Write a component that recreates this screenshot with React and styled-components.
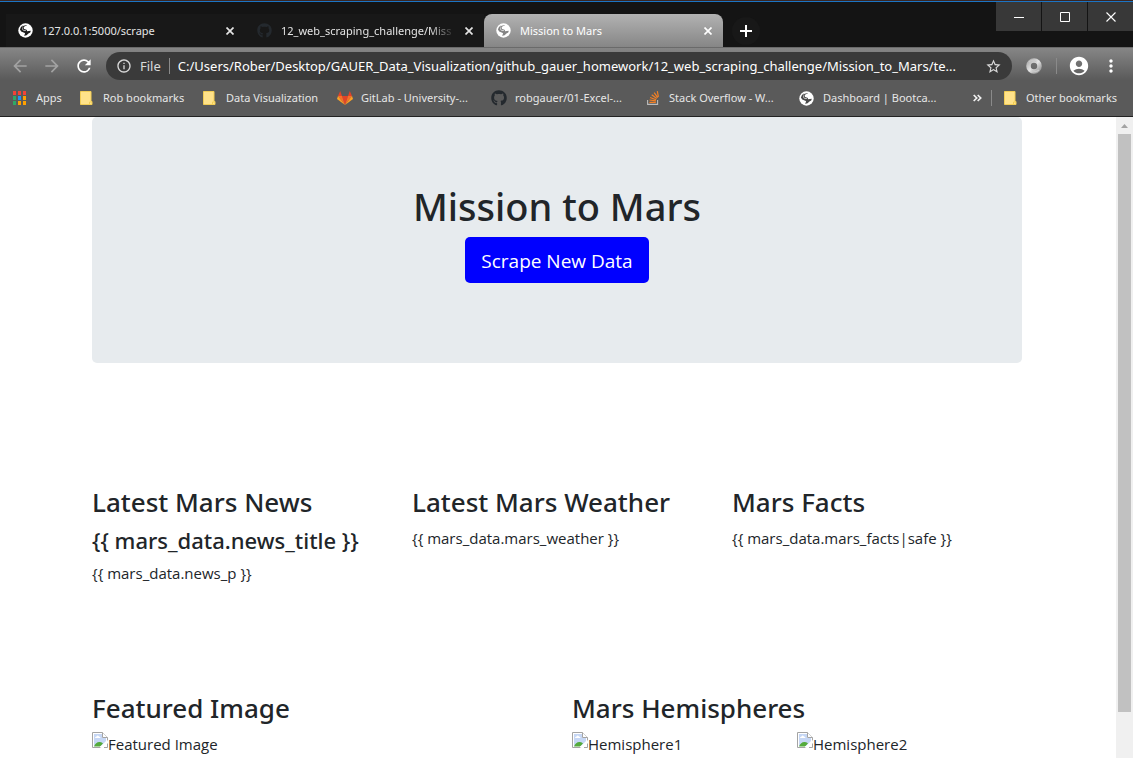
import React from 'react';
import styled, { createGlobalStyle, css } from 'styled-components';
import {
  MdArrowBack,
  MdArrowForward,
  MdRefresh,
  MdInfoOutline,
  MdStarBorder,
  MdAccountCircle,
  MdMoreVert,
} from 'react-icons/md';
import { FaGithub } from 'react-icons/fa';

const GlobalStyle = createGlobalStyle`
  * { box-sizing: border-box; }
  body {
    margin: 0;
    background: #fff;
    color: #212529;
    font-family: "Open Sans", "Noto Sans", sans-serif;
    font-size: 15px;
    line-height: 24px;
  }
  button { font-family: inherit; border: 0; padding: 0; background: none; }
  h1, h2, h3, p { margin: 0; }
  h1, h2, h3 { font-family: "Noto Sans", sans-serif; font-weight: 500; }
  a { color: inherit; text-decoration: none; }
  svg { display: block; flex: none; }
`;

const Window = styled.div`
  display: flex;
  flex-direction: column;
  height: 100vh;
  overflow: hidden;
`;

/* ---------- Title bar and tabs ---------- */

const TitleBar = styled.header`
  display: flex;
  flex: none;
  justify-content: space-between;
  height: 47px;
  background: #141414;
  border-top: 1px solid #3a2622;
  box-shadow: inset 0 1px 0 #1b74c4;
  font-family: "Noto Sans", sans-serif;
`;

const TabStrip = styled.div`
  display: flex;
  align-items: flex-end;
  min-width: 0;
  padding-left: 6px;
`;

const Tab = styled.div`
  position: relative;
  display: flex;
  align-items: center;
  width: 239px;
  height: 33px;
  padding: 0 9px 0 12px;
  color: #e4e4e4;
  background: #181818;
  ${(p) => p.$divider && css`
    &::after {
      content: "";
      position: absolute;
      right: -1px;
      top: 7px;
      width: 1px;
      height: 20px;
      background: #5c5c5c;
    }
  `}
  ${(p) => p.$active && css`
    color: #fff;
    background: linear-gradient(#b2b2b2, #868686);
    border-radius: 8px 8px 0 0;
  `}
`;

const TabTitle = styled.a`
  flex: 1;
  min-width: 0;
  margin: 0 8px 0 9px;
  overflow: hidden;
  white-space: nowrap;
  font-size: 11px;
  line-height: 18px;
  ${(p) => p.$fade && css`
    mask-image: linear-gradient(to right, #000 85%, transparent);
  `}
`;

const CloseTab = styled.button`
  display: flex;
  justify-content: center;
  width: 12px;
  color: inherit;
`;

const NewTab = styled.button`
  display: grid;
  place-items: center;
  width: 28px;
  height: 28px;
  margin: 0 0 2px 9px;
  border-radius: 14px;
  color: #fff;
  background: #181818;
`;

const WindowControls = styled.div`
  display: flex;
  flex: none;
  gap: 1px;
  padding-top: 1px;
`;

const WindowButton = styled.button`
  display: grid;
  place-items: center;
  width: 45px;
  height: 29px;
  color: #fff;
  background: #383838;
`;

/* ---------- Toolbar and bookmarks ---------- */

const Chrome = styled.div`
  flex: none;
  background: linear-gradient(#868686, #5a5a5a 32px);
  border-top: 1px solid #6a6a6a;
  border-bottom: 1px solid #222;
  font-family: "Noto Sans", sans-serif;
`;

const Toolbar = styled.nav`
  display: flex;
  align-items: center;
  height: 36px;
  padding: 0 12px 0 10px;
`;

const ToolButton = styled.button`
  display: grid;
  place-items: center;
  width: 20px;
  height: 28px;
  margin-right: 12px;
  color: ${(p) => (p.$muted ? '#a2a2a2' : '#fff')};
`;

const AddressBar = styled.div`
  display: flex;
  flex: 1;
  align-items: center;
  min-width: 0;
  height: 28px;
  padding: 0 10px;
  border-radius: 14px;
  background: #3a3a3a;
  color: #dadada;
  font-size: 13px;
  line-height: 20px;
`;

const Scheme = styled.span`
  margin-left: 8px;
`;

const Divider = styled.span`
  flex: none;
  width: 1px;
  height: 16px;
  margin: ${(p) => p.$margin};
  background: #8a8a8a;
`;

const Address = styled.input`
  flex: 1;
  min-width: 0;
  padding: 0;
  border: 0;
  outline: 0;
  background: none;
  color: #fff;
  font: inherit;
`;

const ToolbarEnd = styled.div`
  display: flex;
  flex: none;
  align-items: center;
  padding-left: 14px;
`;

const EndButton = styled.button`
  display: grid;
  place-items: center;
  width: ${(p) => p.$width};
  color: #fff;
`;

const MenuButton = styled(EndButton)`
  margin-left: 11px;
`;

const Bookmarks = styled.nav`
  display: flex;
  align-items: center;
  height: 32px;
  padding: 0 14px 4px 12px;
  color: #e6e6e6;
  font-size: 11px;
  line-height: 18px;
`;

const Bookmark = styled.a`
  display: flex;
  flex: none;
  align-items: center;
  width: ${(p) => p.$width};
  white-space: nowrap;
`;

const BookmarkIcon = styled.span`
  display: flex;
  flex: none;
  width: ${(p) => p.$width || '24px'};
`;

const BookmarksEnd = styled.div`
  display: flex;
  align-items: center;
  margin-left: auto;
`;

/* ---------- Page ---------- */

const Viewport = styled.div`
  display: flex;
  flex: 1;
  min-height: 0;
`;

const Page = styled.main`
  flex: 1;
  min-width: 0;
  padding-right: 2px;
  overflow: hidden;
`;

const Container = styled.div`
  max-width: 960px;
  margin: 0 auto;
  padding: 0 15px;
`;

const Jumbotron = styled.section`
  display: flex;
  flex-direction: column;
  align-items: center;
  padding: 65px 32px 80px;
  border-radius: 5px;
  background: #e7ebee;
`;

const PageTitle = styled.h1`
  margin-bottom: 7px;
  font-size: 38px;
  line-height: 48px;
`;

const ScrapeButton = styled.button`
  padding: 9px 16px 7px;
  border-radius: 5px;
  background: #00f;
  color: #fff;
  font-size: 19px;
  line-height: 30px;
`;

const Row = styled.div`
  display: grid;
  grid-template-columns: repeat(${(p) => p.$columns}, 1fr);
  column-gap: 30px;
  margin-top: ${(p) => p.$top};
`;

const Heading = styled.h2`
  margin-bottom: 7px;
  font-size: 26px;
  line-height: 34px;
  white-space: nowrap;
`;

const NewsTitle = styled.h3`
  margin-bottom: 6px;
  font-size: 22px;
  line-height: 29px;
  white-space: nowrap;
`;

const Gallery = styled.div`
  display: grid;
  grid-template-columns: 1fr 1fr;
`;

const Missing = styled.div`
  display: flex;
  white-space: nowrap;
`;

const ScrollTrack = styled.div`
  display: flex;
  flex: none;
  flex-direction: column;
  width: 17px;
  background: #f0f0f0;
`;

const ScrollArrow = styled.button`
  display: grid;
  place-items: center;
  height: 17px;
`;

const ScrollThumb = styled.div`
  height: 93%;
  max-height: calc(100% - 63px);
  margin: 0 2px;
  background: #c1c1c1;
`;

/* ---------- Drawings ---------- */

const GlobeIcon = ({ land = '#1c1c1c' }) => (
  <svg width="15" height="15" viewBox="0 0 15 15" aria-hidden="true">
    <circle cx="7.5" cy="7.5" r="7.2" fill="#fff" />
    <path
      d="M9.2 2.4Q6 2.6 5.6 4.6Q5.4 6.400 7.800 6.600Q9.400 6.900 9 8.300L12.800 7.700Q12.900 9.900 10.400 10.400Q8.600 12.900 6.200 12.700Q6.200 11.900 7.100 11.100Q7.300 9.600 5.600 9.400L3.200 8.600 1.900 6.500Q2.400 3.400 5.200 2.200Q3.900 4.200 4.100 5.700Q4.400 7.500 6.800 8Q8.700 8.300 7.900 7.500Q4.400 7.500 4.500 4.600Q5 2 9.200 2.400Z"
      fill={land}
    />
  </svg>
);

const CrossIcon = ({ size = 8, weight = 1.7 }) => (
  <svg width={size} height={size} viewBox={`0 0 ${size} ${size}`} aria-hidden="true">
    <path d={`M.5.5 ${size - 0.5} ${size - 0.5}M${size - 0.5} .5.5 ${size - 0.5}`} stroke="currentColor" strokeWidth={weight} />
  </svg>
);

const PlusIcon = () => (
  <svg width="12" height="12" viewBox="0 0 12 12" aria-hidden="true">
    <path d="M6 0v12M0 6h12" stroke="currentColor" strokeWidth="2" />
  </svg>
);

const MinimizeIcon = () => (
  <svg width="10" height="10" viewBox="0 0 10 10" aria-hidden="true">
    <path d="M0 5.5h10" stroke="currentColor" />
  </svg>
);

const MaximizeIcon = () => (
  <svg width="10" height="10" viewBox="0 0 10 10" aria-hidden="true">
    <path d="M.5.5h9v9h-9z" fill="none" stroke="currentColor" />
  </svg>
);

const appColors = ['#f44336', '#f44336', '#f44336', '#2fa866', '#2196f3', '#ffa000', '#2fa866', '#ffa000', '#ffa000'];

const AppsIcon = () => (
  <svg width="14" height="14" viewBox="0 0 14 14" aria-hidden="true">
    {appColors.map((fill, i) => (
      <rect key={i} x={1 + (i % 3) * 5} y={Math.floor(i / 3) * 5} width="3" height="4" fill={fill} />
    ))}
  </svg>
);

const FolderIcon = () => (
  <svg width="14" height="14" viewBox="0 0 14 14" aria-hidden="true">
    <path d="M1.5.5H12v10h1v3H1.5z" fill="#ffe28a" stroke="#f2cd55" />
    <path d="M10.5 13.5v-2.5h2.5" fill="none" stroke="#f2cd55" />
  </svg>
);

const GitLabIcon = () => (
  <svg width="16" height="14" viewBox="0 0 16 14" aria-hidden="true">
    <path d="M8 14 5 5h6z" fill="#e24329" />
    <path d="M8 14 5 5H1zM8 14l3-9h4z" fill="#fc6d26" />
    <path d="M1 5 0 8l8 6zM15 5l1 3-8 6z" fill="#fca326" />
    <path d="M1 5h4L3.2 0zM15 5h-4l1.8-5z" fill="#e24329" />
  </svg>
);

const StackOverflowIcon = () => (
  <svg width="15" height="14" viewBox="-2 0 15 14" aria-hidden="true">
    <path d="M.6 9v4.4h10V9" fill="none" stroke="#bcbbbb" strokeWidth="1.1" />
    <path d="M2.4 11.4h6.4M2.5 9 8.9 9.9M3.1 6.5l6 2.3M4.7 3.8 9.7 7.6M7.2 1.6l3.5 5M10.3.2l1.1 5.6" stroke="#f48024" strokeWidth="1.2" />
  </svg>
);

const ExtensionIcon = () => (
  <svg width="16" height="16" viewBox="0 0 16 16" aria-hidden="true">
    <defs>
      <linearGradient id="ring" x1="0" y1="0" x2="1" y2="1">
        <stop offset="0" stopColor="#b0b0b0" />
        <stop offset=".5" stopColor="#e4e4e4" />
        <stop offset="1" stopColor="#999" />
      </linearGradient>
    </defs>
    <ellipse cx="8" cy="8" rx="5.5" ry="5.5" fill="none" stroke="url(#ring)" strokeWidth="4.6" />
    <path d="M3 4Q7 .8 10.5 4.3M13 12Q9 15.2 5.5 11.7" fill="none" stroke="#c9c9c9" strokeWidth="1.2" />
  </svg>
);

const ChevronsIcon = () => (
  <svg width="9" height="8" viewBox="0 0 9 8" aria-hidden="true">
    <path d="m.7 1 3 3-3 3m4-6 3 3-3 3" fill="none" stroke="#f1f1f1" strokeWidth="1.7" />
  </svg>
);

const BrokenImageIcon = () => (
  <svg width="16" height="16" viewBox="0 0 16 16" aria-hidden="true">
    <path d="M.5.5h10l5 5v10H.5z" fill="#fff" stroke="#a4a4a4" />
    <path d="M2 2h8v4h4v8H2z" fill="#c6d7f5" />
    <path d="M3 6q0-1.5 1.5-1.5Q5.5 2.6 7 4.5q1.5 0 1.5 1.5z" fill="#fff" />
    <path d="M2 14.500q2-5 6-4.500 2 0 3 1.500L8 14.500z" fill="#54ab3c" />
    <path d="M10.5.5v5h5" fill="#fff" stroke="#a4a4a4" />
    <path d="m16 8.5-7.5 7.5H16z" fill="#fff" />
    <path d="M15.5 11.5v4H12" fill="none" stroke="#a4a4a4" />
    <path d="M8.5 15.500 15.5 8.500" stroke="#fff" strokeWidth="1.500" />
  </svg>
);

const ArrowUpIcon = () => (
  <svg width="7" height="4" viewBox="0 0 7 4" aria-hidden="true">
    <path d="M3.5 0 7 4H0z" fill="#a3a3a3" />
  </svg>
);

/* ---------- Content ---------- */

const tabs = [
  { title: '127.0.0.1:5000/scrape', icon: <GlobeIcon />, divider: true },
  { title: '12_web_scraping_challenge/Miss', icon: <FaGithub size={15} color="#24292e" />, fade: true },
  { title: 'Mission to Mars', icon: <GlobeIcon land="#858585" />, active: true },
];

const bookmarks = [
  { label: 'Apps', icon: <AppsIcon />, width: '67px' },
  { label: 'Rob bookmarks', icon: <FolderIcon />, width: '123px' },
  { label: 'Data Visualization', icon: <FolderIcon />, width: '135px' },
  { label: 'GitLab - University-...', icon: <GitLabIcon />, width: '154px' },
  { label: 'robgauer/01-Excel-...', icon: <FaGithub size={16} color="#24292e" />, width: '154px' },
  { label: 'Stack Overflow - W...', icon: <StackOverflowIcon />, width: '154px' },
  { label: 'Dashboard | Bootca...', icon: <GlobeIcon land="#4a4a4a" />, width: '154px' },
];

const MissingImage = ({ alt }) => (
  <Missing role="img" aria-label={alt}>
    <BrokenImageIcon />
    <span>{alt}</span>
  </Missing>
);

export default function App() {
  return (
    <Window>
      <GlobalStyle />
      <TitleBar>
        <TabStrip>
          {tabs.map((tab) => (
            <Tab key={tab.title} $active={tab.active} $divider={tab.divider}>
              {tab.icon}
              <TabTitle href="#" $fade={tab.fade}>{tab.title}</TabTitle>
              <CloseTab aria-label="Close tab"><CrossIcon /></CloseTab>
            </Tab>
          ))}
          <NewTab aria-label="New tab"><PlusIcon /></NewTab>
        </TabStrip>
        <WindowControls>
          <WindowButton aria-label="Minimize"><MinimizeIcon /></WindowButton>
          <WindowButton aria-label="Maximize"><MaximizeIcon /></WindowButton>
          <WindowButton aria-label="Close"><CrossIcon size={10} weight={1.1} /></WindowButton>
        </WindowControls>
      </TitleBar>

      <Chrome>
        <Toolbar>
          <ToolButton $muted aria-label="Back"><MdArrowBack size={20} /></ToolButton>
          <ToolButton $muted aria-label="Forward"><MdArrowForward size={20} /></ToolButton>
          <ToolButton aria-label="Reload"><MdRefresh size={20} /></ToolButton>
          <AddressBar>
            <MdInfoOutline size={16} />
            <Scheme>File</Scheme>
            <Divider $margin="0 8px" />
            <Address
              aria-label="Address"
              defaultValue="C:/Users/Rober/Desktop/GAUER_Data_Visualization/github_gauer_homework/12_web_scraping_challenge/Mission_to_Mars/te..."
            />
            <MdStarBorder size={17} />
          </AddressBar>
          <ToolbarEnd>
            <EndButton $width="16px" aria-label="Extension"><ExtensionIcon /></EndButton>
            <Divider $margin="0 11px 0 14px" />
            <EndButton $width="22px" aria-label="Profile"><MdAccountCircle size={22} /></EndButton>
            <MenuButton $width="20px" aria-label="Menu"><MdMoreVert size={20} /></MenuButton>
          </ToolbarEnd>
        </Toolbar>
        <Bookmarks>
          {bookmarks.map((item) => (
            <Bookmark key={item.label} href="#" $width={item.width}>
              <BookmarkIcon>{item.icon}</BookmarkIcon>
              {item.label}
            </Bookmark>
          ))}
          <BookmarksEnd>
            <ChevronsIcon />
            <Divider $margin="0 11px 0 9px" />
            <Bookmark href="#" $width="116px">
              <BookmarkIcon $width="23px"><FolderIcon /></BookmarkIcon>
              Other bookmarks
            </Bookmark>
          </BookmarksEnd>
        </Bookmarks>
      </Chrome>

      <Viewport>
        <Page>
          <Container>
            <Jumbotron>
              <PageTitle>Mission to Mars</PageTitle>
              <ScrapeButton>Scrape New Data</ScrapeButton>
            </Jumbotron>
            <Row $columns={3} $top="122px">
              <section>
                <Heading>Latest Mars News</Heading>
                <NewsTitle>{'{{ mars_data.news_title }}'}</NewsTitle>
                <p>{'{{ mars_data.news_p }}'}</p>
              </section>
              <section>
                <Heading>Latest Mars Weather</Heading>
                <p>{'{{ mars_data.mars_weather }}'}</p>
              </section>
              <section>
                <Heading>Mars Facts</Heading>
                <p>{'{{ mars_data.mars_facts|safe }}'}</p>
              </section>
            </Row>
            <Row $columns={2} $top="106px">
              <section>
                <Heading>Featured Image</Heading>
                <MissingImage alt="Featured Image" />
              </section>
              <section>
                <Heading>Mars Hemispheres</Heading>
                <Gallery>
                  <MissingImage alt="Hemisphere1" />
                  <MissingImage alt="Hemisphere2" />
                </Gallery>
              </section>
            </Row>
          </Container>
        </Page>
        <ScrollTrack>
          <ScrollArrow aria-label="Scroll up"><ArrowUpIcon /></ScrollArrow>
          <ScrollThumb />
        </ScrollTrack>
      </Viewport>
    </Window>
  );
}
